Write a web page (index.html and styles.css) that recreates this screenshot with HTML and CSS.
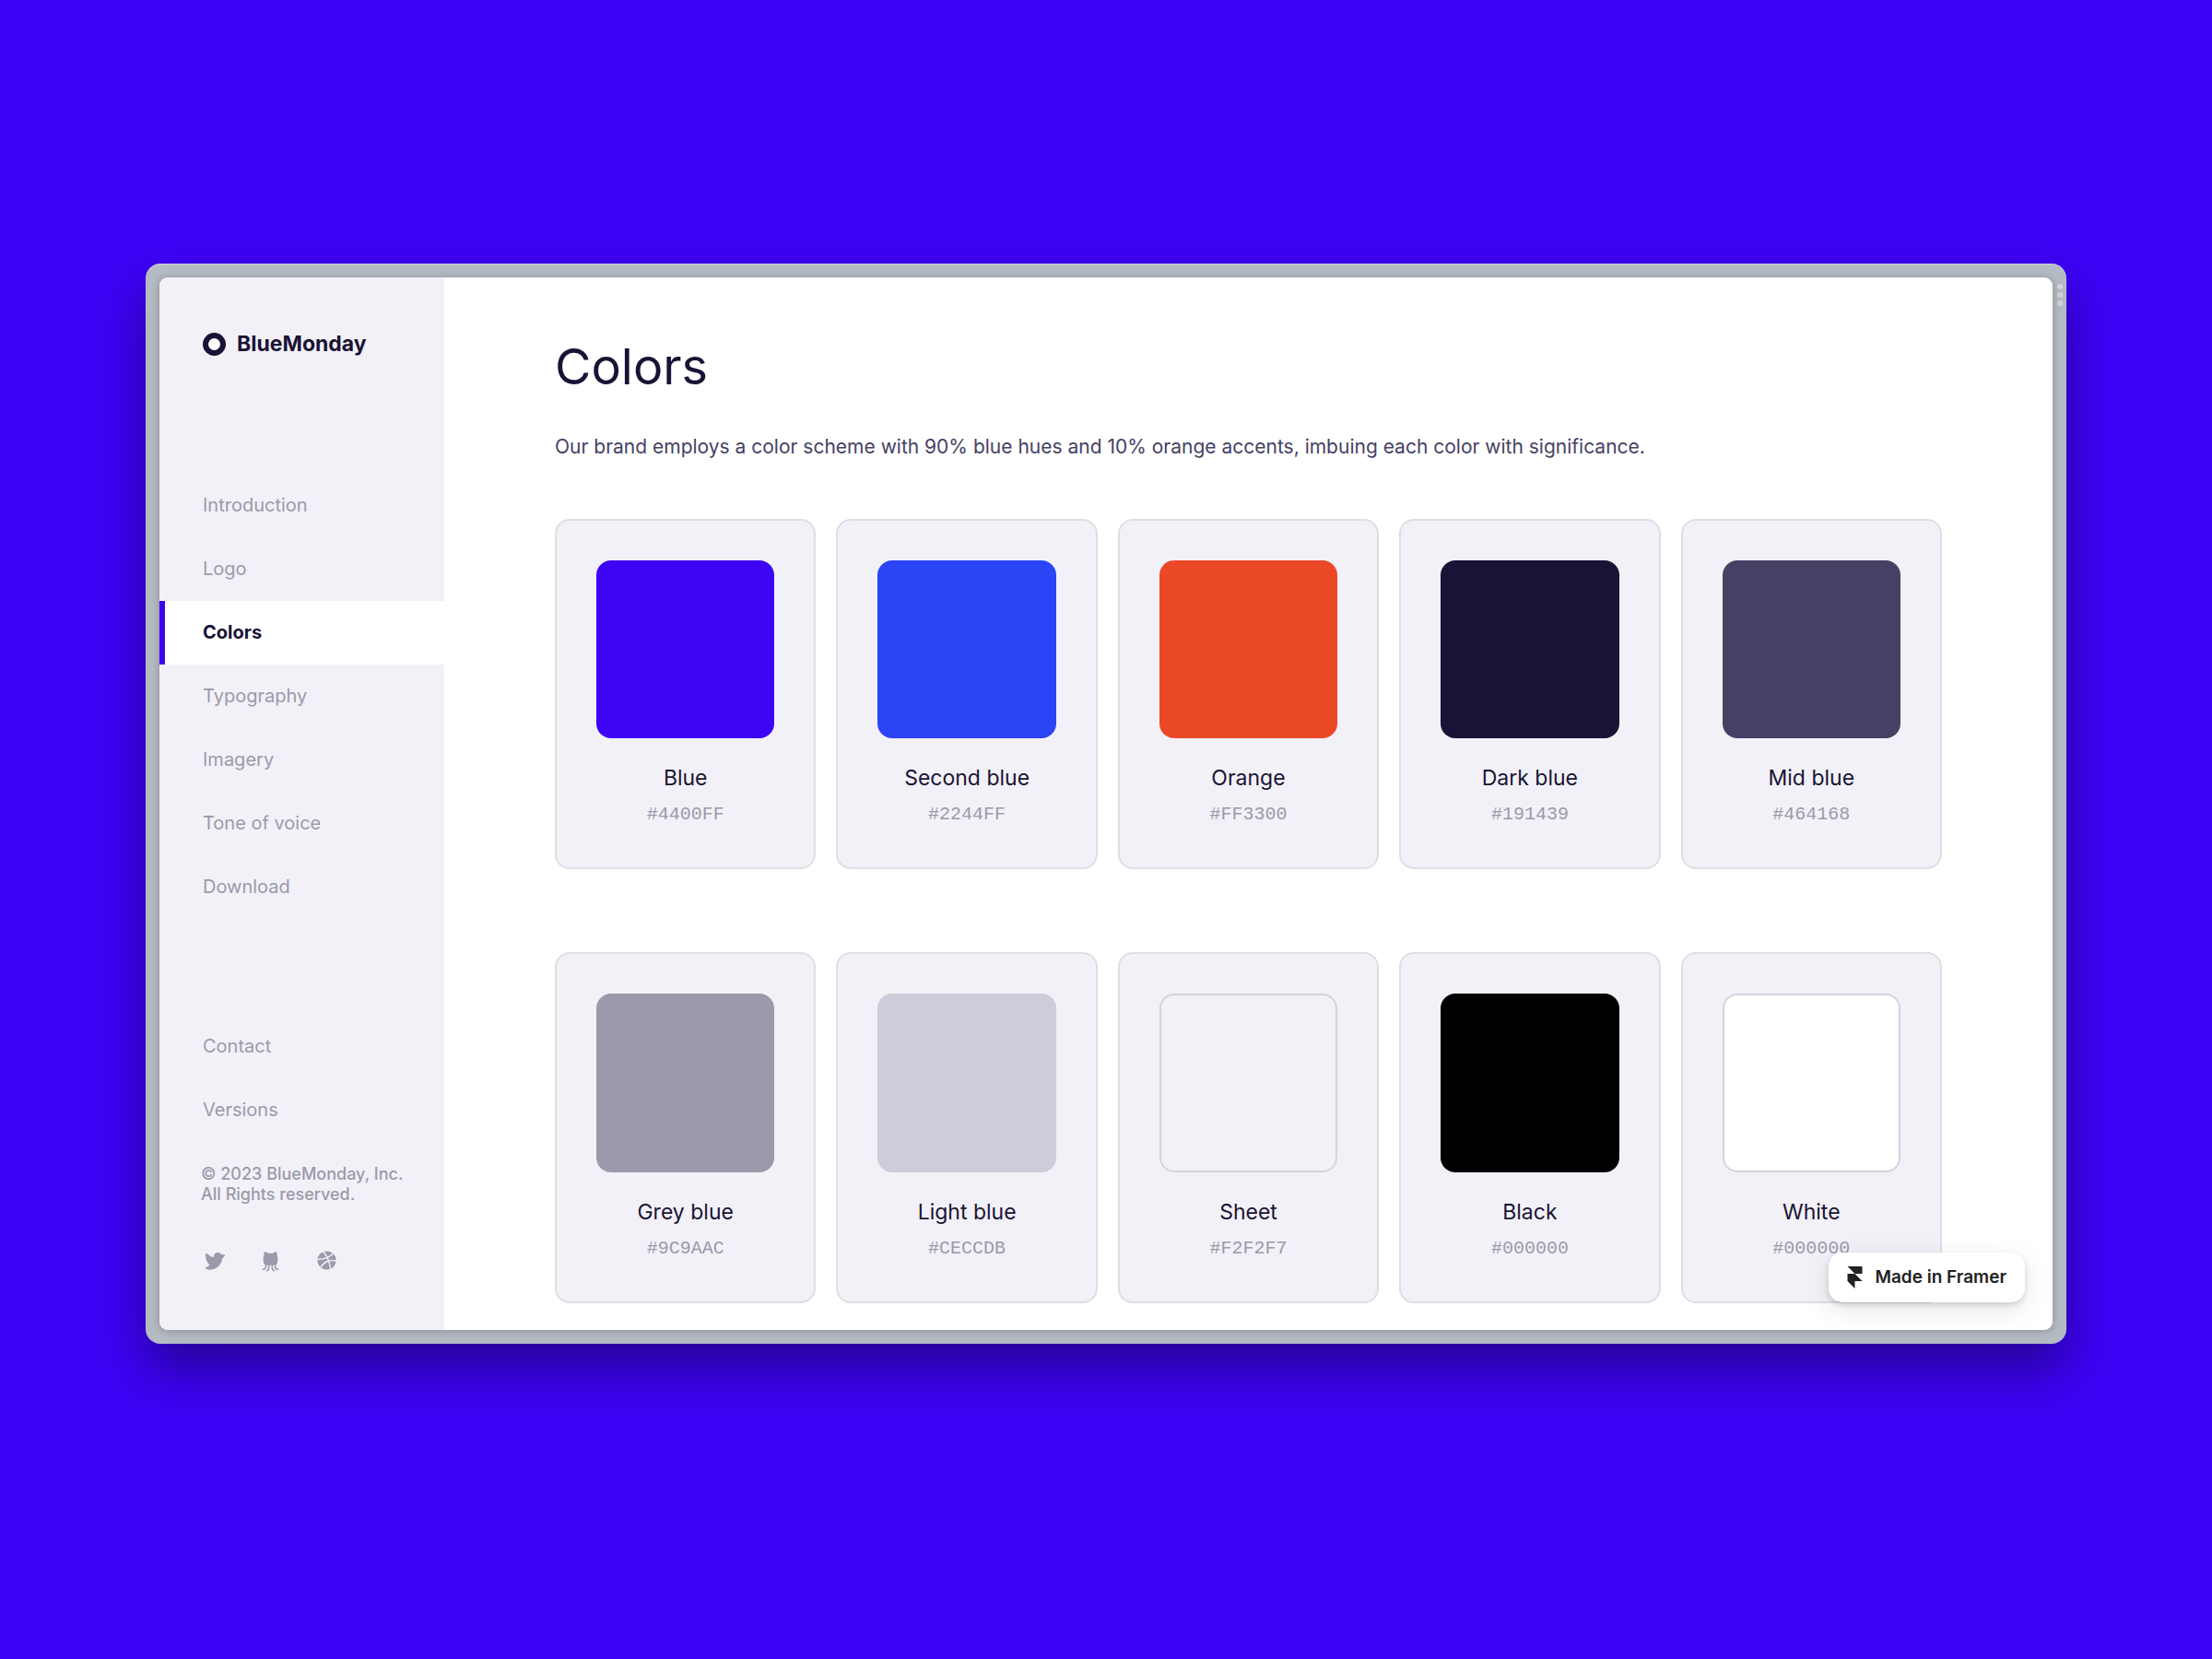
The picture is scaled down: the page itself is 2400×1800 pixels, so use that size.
FILE: index.html
```html
<!DOCTYPE html>
<html lang="en">
<head>
    <meta charset="UTF-8">
    <meta name="viewport" content="width=device-width, initial-scale=1.0">
    <title>Colors - BlueMonday</title>
    <link rel="stylesheet" href="styles.css">
</head>
<body>
    <div class="frame">
        <button class="frame-menu" type="button" aria-label="Window menu">
            <span class="dot"></span>
            <span class="dot"></span>
            <span class="dot"></span>
        </button>

        <div class="window">
            <aside class="sidebar">
                <a class="logo" href="#">
                    <span class="logo-mark"></span>
                    <span>BlueMonday</span>
                </a>

                <nav class="nav">
                    <a class="nav-link" href="#introduction">Introduction</a>
                    <a class="nav-link" href="#logo">Logo</a>
                    <a class="nav-link active" href="#colors">Colors</a>
                    <a class="nav-link" href="#typography">Typography</a>
                    <a class="nav-link" href="#imagery">Imagery</a>
                    <a class="nav-link" href="#voice">Tone of voice</a>
                    <a class="nav-link" href="#download">Download</a>
                </nav>

                <nav class="nav nav-secondary">
                    <a class="nav-link" href="#contact">Contact</a>
                    <a class="nav-link" href="#versions">Versions</a>
                </nav>

                <p class="copyright">© 2023 BlueMonday, Inc.<br>All Rights reserved.</p>

                <div class="social">
                    <a href="#twitter" aria-label="Twitter">
                        <svg class="social-icon" viewBox="0 0 256 256" fill="currentColor">
                            <path d="M245.66,77.66l-29.9,29.9C209.72,177.58,150.67,232,80,232c-14.52,0-26.49-2.3-35.58-6.84-7.33-3.67-10.33-7.6-11.08-8.72a8,8,0,0,1,3.85-11.93c.26-.1,24.24-9.31,39.47-26.84a110.93,110.93,0,0,1-21.88-24.2c-12.4-18.41-26.28-50.39-22-98.18a8,8,0,0,1,13.65-4.92c.35.35,33.28,33.1,73.54,43.72V88a47.87,47.87,0,0,1,14.36-34.3A46.87,46.87,0,0,1,168.1,40a48.66,48.66,0,0,1,41.47,24H240a8,8,0,0,1,5.66,13.66Z"/>
                        </svg>
                    </a>
                    <a href="#github" aria-label="GitHub">
                        <svg class="social-icon" viewBox="0 0 24 24" fill="none" stroke="currentColor" stroke-width="1.5" stroke-linecap="round">
                            <path fill="currentColor" stroke="none" d="M5.6 3.3C6 2.7 8 3 9.6 4.6h4.8C16 3 18 2.7 18.4 3.3c.5.9.5 2.2.2 3.2.7 1 .9 2 .9 3.5v2.500c0 2.700-1.500 4.500-4 4.500h-7c-2.500 0-4-1.800-4-4.500V10c0-1.500.2-2.500.9-3.500-.3-1-.3-2.300.2-3.200z"/>
                            <path d="M7.200 15.500v2.700c0 1.800-1.200 3.100-3.200 3.100M10.300 16v3.700c0 1.500-.8 2.700-2.200 3M13.700 16v3.700c0 1.500.8 2.700 2.200 3M16.800 15.500v2.700c0 1.800 1.200 3.100 3.200 3.100"/>
                        </svg>
                    </a>
                    <a href="#dribbble" aria-label="Dribbble">
                        <svg class="social-icon" viewBox="0 0 24 24" fill="none">
                            <circle cx="12" cy="12" r="9.700" fill="currentColor"/>
                            <path stroke="#f2f1f7" stroke-width="1.400" d="M7.800 2.400c4.200 4.300 7.200 10.400 8.400 19.400M2 10.800c6.500.2 12.500-1.300 16.600-6M5.700 20c2.200-5.700 8.500-9.300 16.500-7.300"/>
                        </svg>
                    </a>
                </div>
            </aside>

            <main class="content">
                <h1 class="title">Colors</h1>
                <p class="intro">Our brand employs a color scheme with 90% blue hues and 10% orange accents, imbuing each color with significance.</p>

                <ul class="palette">
                    <li class="card">
                        <div class="swatch swatch-blue"></div>
                        <h2 class="card-name">Blue</h2>
                        <p class="card-code">#4400FF</p>
                    </li>
                    <li class="card">
                        <div class="swatch swatch-second-blue"></div>
                        <h2 class="card-name">Second blue</h2>
                        <p class="card-code">#2244FF</p>
                    </li>
                    <li class="card">
                        <div class="swatch swatch-orange"></div>
                        <h2 class="card-name">Orange</h2>
                        <p class="card-code">#FF3300</p>
                    </li>
                    <li class="card">
                        <div class="swatch swatch-dark-blue"></div>
                        <h2 class="card-name">Dark blue</h2>
                        <p class="card-code">#191439</p>
                    </li>
                    <li class="card">
                        <div class="swatch swatch-mid-blue"></div>
                        <h2 class="card-name">Mid blue</h2>
                        <p class="card-code">#464168</p>
                    </li>
                    <li class="card">
                        <div class="swatch swatch-grey-blue"></div>
                        <h2 class="card-name">Grey blue</h2>
                        <p class="card-code">#9C9AAC</p>
                    </li>
                    <li class="card">
                        <div class="swatch swatch-light-blue"></div>
                        <h2 class="card-name">Light blue</h2>
                        <p class="card-code">#CECCDB</p>
                    </li>
                    <li class="card">
                        <div class="swatch swatch-sheet"></div>
                        <h2 class="card-name">Sheet</h2>
                        <p class="card-code">#F2F2F7</p>
                    </li>
                    <li class="card">
                        <div class="swatch swatch-black"></div>
                        <h2 class="card-name">Black</h2>
                        <p class="card-code">#000000</p>
                    </li>
                    <li class="card">
                        <div class="swatch swatch-white"></div>
                        <h2 class="card-name">White</h2>
                        <p class="card-code">#000000</p>
                    </li>
                </ul>
            </main>

            <a class="framer-badge" href="#framer">
                <svg class="framer-icon" viewBox="0 0 16 24" fill="currentColor">
                    <path d="M0 0h16v8H8zM0 8h8l8 8H0zM0 16h8v8z"/>
                </svg>
                <span>Made in Framer</span>
            </a>
        </div>
    </div>
</body>
</html>
```
FILE: styles.css
```css
* {
    margin: 0;
    padding: 0;
    box-sizing: border-box;
}

body {
    font-family: Inter, 'Liberation Sans', sans-serif;
    background: #3d03f6;
    min-height: 100vh;
    padding: 286px 158px;
    color: #1a1335;
}

a {
    color: inherit;
    text-decoration: none;
}

/* Window frame */
.frame {
    position: relative;
    padding: 15px;
    border-radius: 16px;
    background: #b5bbc3;
    box-shadow: 0 28px 56px rgba(0, 0, 0, 0.4), inset 0 1px 1px rgba(255, 255, 255, 0.4);
}

.frame-menu {
    position: absolute;
    top: 22px;
    right: 4px;
    display: flex;
    flex-direction: column;
    gap: 3px;
    border: none;
    background: none;
    cursor: pointer;
}

.dot {
    width: 6px;
    height: 6px;
    border-radius: 50%;
    background: #d2d5da;
}

.window {
    position: relative;
    display: flex;
    overflow: hidden;
    border-radius: 9px;
    background: #fff;
    box-shadow: 0 1px 10px rgba(0, 0, 0, 0.25);
}

/* Sidebar */
.sidebar {
    width: 309px;
    flex-shrink: 0;
    padding-top: 57px;
    background: #f2f1f7;
    color: #9c99ab;
}

.logo {
    display: flex;
    align-items: center;
    gap: 12px;
    margin: 0 47px 126px;
    font-size: 23px;
    line-height: 30px;
    font-weight: 700;
    color: #1a1335;
}

.logo-mark {
    width: 25px;
    height: 25px;
    border: 6px solid #1a1335;
    border-radius: 50%;
    background: #fff;
}

.nav {
    display: flex;
    flex-direction: column;
}

.nav-secondary {
    margin-top: 104px;
}

.nav-link {
    padding: 0 47px;
    font-size: 20px;
    line-height: 69px;
}

.nav-link.active {
    padding-left: 41px;
    border-left: 6px solid #3d05f0;
    background: #fff;
    color: #1a1335;
    font-weight: 700;
}

.copyright {
    margin: 24px 0 0 45px;
    font-size: 18px;
    line-height: 22px;
    font-weight: 500;
}

.social {
    display: flex;
    gap: 36px;
    margin: 48px 47px 0;
}

.social-icon {
    display: block;
    width: 25px;
    height: 25px;
}

/* Content */
.content {
    flex: 1;
    padding: 65px 120px 29px;
}

.title {
    font-size: 54px;
    line-height: 64px;
    font-weight: 400;
}

.intro {
    margin-top: 39px;
    font-size: 21px;
    line-height: 32px;
    color: #464164;
}

.palette {
    display: grid;
    grid-template-columns: repeat(5, 1fr);
    gap: 90px 22px;
    margin-top: 62px;
    list-style: none;
}

.card {
    padding: 43px 43px 45px;
    border: 2px solid #dfdee4;
    border-radius: 16px;
    background: #f2f1f7;
    text-align: center;
}

.swatch {
    aspect-ratio: 1;
    border-radius: 16px;
}

.swatch-blue { background: #3e04f6; }
.swatch-second-blue { background: #2a44f6; }
.swatch-orange { background: #eb4828; }
.swatch-dark-blue { background: #191335; }
.swatch-mid-blue { background: #464164; }
.swatch-grey-blue { background: #9c99ab; }
.swatch-light-blue { background: #cecbda; }
.swatch-sheet { background: #f2f1f7; border: 2px solid #d5d4dc; }
.swatch-black { background: #000; }
.swatch-white { background: #fff; border: 2px solid #d5d4dc; }

.card-name {
    margin-top: 27px;
    font-size: 23px;
    line-height: 32px;
    font-weight: 400;
}

.card-code {
    margin-top: 12px;
    font-family: 'Courier New', 'Liberation Mono', monospace;
    font-size: 20px;
    line-height: 24px;
    color: #9c99ab;
}

/* Badge */
.framer-badge {
    position: absolute;
    right: 30px;
    bottom: 30px;
    display: flex;
    align-items: center;
    gap: 13px;
    height: 54px;
    padding: 0 20px;
    border-radius: 15px;
    background: #fff;
    box-shadow: 0 3px 6px rgba(0, 0, 0, 0.14), 0 8px 30px rgba(0, 0, 0, 0.1);
    font-size: 19px;
    font-weight: 600;
    color: #222;
}

.framer-icon {
    width: 17px;
    height: 24px;
}
```
